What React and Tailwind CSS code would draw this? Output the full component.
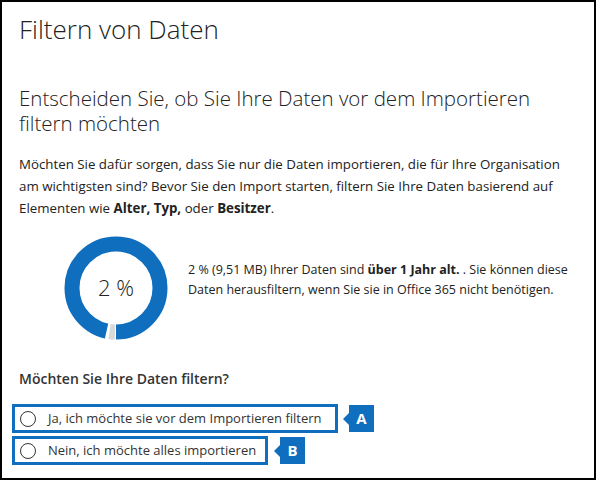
import React from "react";

const font = { fontFamily: '"Open Sans", "Noto Sans", sans-serif' };

function Donut() {
  // ring: 98% blue, 2% gray starting at the bottom
  const r = 44;
  const c = 2 * Math.PI * r;
  const gray = c * 0.02;
  return (
    <svg width="104" height="104" viewBox="0 0 104 104" className="shrink-0">
      <g transform="rotate(90 52 52)">
        <circle cx="52" cy="52" r={r} fill="none" stroke="#106ebe" strokeWidth="15" />
        <circle
          cx="52"
          cy="52"
          r={r}
          fill="none"
          stroke="#ffffff"
          strokeWidth="16"
          strokeDasharray={`${gray + 6} ${c}`}
          strokeDashoffset="2"
        />
        <circle
          cx="52"
          cy="52"
          r={r}
          fill="none"
          stroke="#d9d9d9"
          strokeWidth="15"
          strokeDasharray={`${gray} ${c}`}
          strokeDashoffset="-1"
        />
      </g>
      <text x="52" y="60" textAnchor="middle" fontSize="22" fill="#222" style={font} fontWeight="300">
        2 %
      </text>
    </svg>
  );
}

function Badge({ letter }) {
  return (
    <div className="flex items-center">
      <div className="w-0 h-0 border-y-[6px] border-y-transparent border-r-[6px] border-r-[#106ebe]" />
      <div className="w-[25px] h-[27px] bg-[#106ebe] text-white font-bold text-[15px] flex items-center justify-center">
        {letter}
      </div>
    </div>
  );
}

function Option({ label, width, letter, gap }) {
  return (
    <div className="flex items-center">
      <div
        className={`h-[29px] border-[3px] border-[#106ebe] flex items-center ${width}`}
      >
        <span className="w-4 h-4 rounded-full border-[1.5px] border-[#333] ml-[5px]" />
        <span className="ml-[12px] text-[13px] text-[#333]">{label}</span>
      </div>
      <div className={gap}>
        <Badge letter={letter} />
      </div>
    </div>
  );
}

export default function App() {
  return (
    <div
      className="w-[596px] h-[480px] border-2 border-black bg-white px-[17px] text-[#333] overflow-hidden"
      style={font}
    >
      <h1 className="text-[26px] font-light text-[#222] mt-[10px] leading-[34px]">
        Filtern von Daten
      </h1>

      <h2 className="text-[20.5px] font-light text-[#222] mt-[40px] leading-[25px]">
        Entscheiden Sie, ob Sie Ihre Daten vor dem Importieren filtern möchten
      </h2>

      <p className="text-[13.3px] leading-[22px] mt-[17px] text-[#222]">
        Möchten Sie dafür sorgen, dass Sie nur die Daten importieren, die für Ihre Organisation am
        wichtigsten sind? Bevor Sie den Import starten, filtern Sie Ihre Daten basierend auf
        Elementen wie <b>Alter, Typ,</b> oder <b>Besitzer</b>.
      </p>

      <div className="flex items-center mt-[17px] ml-[45px]">
        <Donut />
        <p className="ml-[20px] text-[12.5px] leading-[20px] text-[#222] -mt-[16px]">
          2 % (9,51 MB) Ihrer Daten sind <b>über 1 Jahr alt.</b> . Sie können diese Daten
          herausfiltern, wenn Sie sie in Office 365 nicht benötigen.
        </p>
      </div>

      <h3 className="text-[14px] font-semibold text-[#333] mt-[29px] leading-[20px]">
        Möchten Sie Ihre Daten filtern?
      </h3>

      <div className="-ml-[7px] mt-[15px] flex flex-col gap-[3px]">
        <Option
          label="Ja, ich möchte sie vor dem Importieren filtern"
          width="w-[326px]"
          letter="A"
          gap="ml-[5px]"
        />
        <Option
          label="Nein, ich möchte alles importieren"
          width="w-[256px]"
          letter="B"
          gap="ml-[6px]"
        />
      </div>
    </div>
  );
}
